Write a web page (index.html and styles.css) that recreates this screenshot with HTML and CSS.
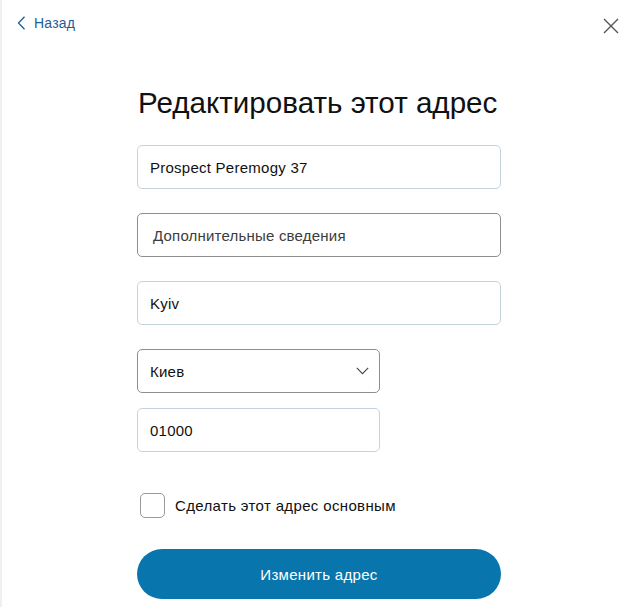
FILE: index.html
```html
<!DOCTYPE html>
<html lang="ru">
<head>
<meta charset="utf-8">
<title>Редактировать этот адрес</title>
<link rel="stylesheet" href="styles.css">
</head>
<body>
<div class="page">
  <header class="topbar">
    <a class="back" href="#">
      <svg class="back-icon" width="9" height="14" viewBox="0 0 9 14"><path d="M7.5 0.8 L1.5 7 L7.5 13.2" fill="none" stroke="#1f5c96" stroke-width="1.3"/></svg>
      <span>Назад</span>
    </a>
    <button class="close" aria-label="Закрыть">
      <svg width="16" height="16" viewBox="0 0 16 16"><path d="M1 1 L15 15 M15 1 L1 15" stroke="#555" stroke-width="1.4" fill="none"/></svg>
    </button>
  </header>
  <main class="form">
    <h1 class="title">Редактировать этот адрес</h1>
    <div class="field field-light wide">Prospect Peremogy 37</div>
    <div class="field field-dark wide placeholder">Дополнительные сведения</div>
    <div class="field field-light wide">Kyiv</div>
    <div class="field field-dark narrow select">
      <span>Киев</span>
      <svg width="13" height="8" viewBox="0 0 13 8"><path d="M0.8 0.8 L6.5 6.6 L12.2 0.8" fill="none" stroke="#444" stroke-width="1.1"/></svg>
    </div>
    <div class="field field-light narrow zip">01000</div>
    <label class="check-row">
      <span class="checkbox"></span>
      <span class="check-label">Сделать этот адрес основным</span>
    </label>
    <button class="submit">Изменить адрес</button>
  </main>
</div>
</body>
</html>
```

FILE: styles.css
```css
html, body {
  margin: 0;
  padding: 0;
  background: #fff;
}
body {
  font-family: "Liberation Sans", Arial, sans-serif;
  color: #111;
}
.page {
  width: 620px;
  height: 607px;
  box-sizing: border-box;
  border-left: 2px solid #f0f0f0;
  overflow: hidden;
}
.topbar {
  display: flex;
  justify-content: space-between;
  align-items: flex-start;
  height: 60px;
}
.back {
  display: flex;
  align-items: center;
  gap: 8px;
  margin: 15px 0 0 15px;
  color: #1f5c96;
  text-decoration: none;
  font-size: 14px;
  letter-spacing: 0.2px;
}
.back-icon {
  display: block;
}
.close {
  border: 0;
  background: none;
  padding: 0;
  margin: 18px 0 0 0;
  width: 17px;
  height: 16px;
  display: block;
}
.close svg { display: block; }
.form {
  margin-left: 135px;
  width: 364px;
  display: flex;
  flex-direction: column;
}
.title {
  font-weight: normal;
  font-size: 29.6px;
  margin: 23px 0 22px 1px;
  line-height: 40px;
  white-space: nowrap;
}
.field {
  box-sizing: border-box;
  height: 44px;
  border-radius: 5px;
  font-size: 15px;
  padding: 0 12px;
  display: flex;
  align-items: center;
  margin-bottom: 24px;
  color: #111;
  letter-spacing: 0.25px;
}
.field-light { border: 1px solid #c5d4dc; }
.field-dark { border: 1px solid #8e8e8e; }
.wide { width: 364px; }
.narrow { width: 243px; }
.placeholder {
  color: #3c3c3c;
  padding-left: 15px;
  letter-spacing: 0.2px;
}
.select {
  justify-content: space-between;
  padding-right: 10px;
  margin-bottom: 15px;
}
.zip { margin-bottom: 41px; }
.check-row {
  display: flex;
  align-items: center;
  gap: 10px;
  margin-left: 3px;
  height: 25px;
  margin-bottom: 31px;
}
.checkbox {
  width: 25px;
  height: 25px;
  box-sizing: border-box;
  border: 1px solid #999;
  border-radius: 5px;
}
.check-label {
  font-size: 15px;
  color: #111;
  letter-spacing: 0.35px;
}
.submit {
  width: 364px;
  height: 50px;
  border: 0;
  border-radius: 25px;
  background: #0876ac;
  color: #fff;
  font-family: "Liberation Sans", Arial, sans-serif;
  font-size: 15px;
  letter-spacing: 0.3px;
}
```
